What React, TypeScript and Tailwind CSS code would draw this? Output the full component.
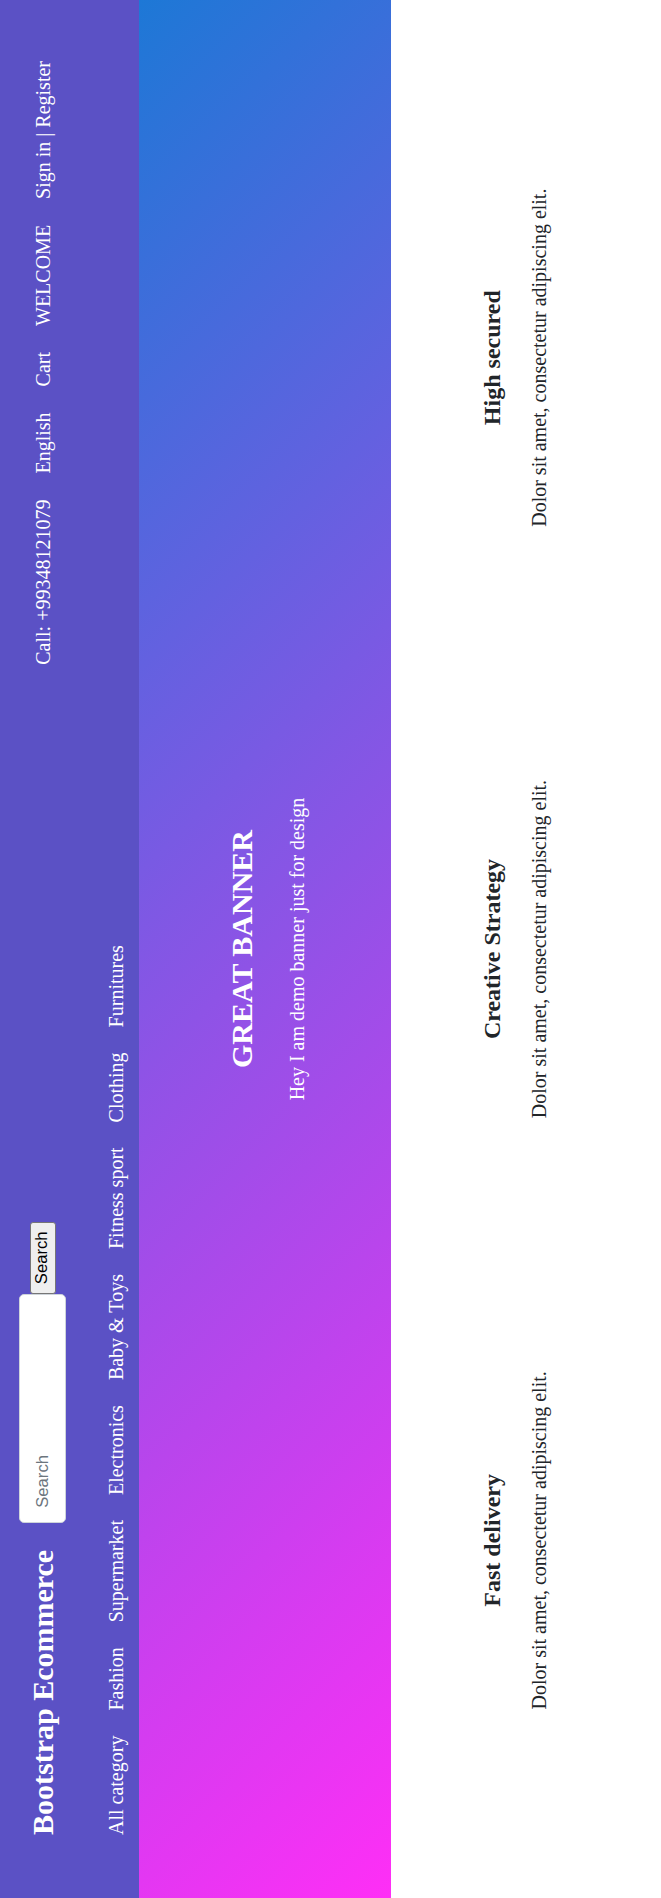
export default function App() {
  const topLinks = ["Call: +99348121079", "English", "Cart", "WELCOME"];
  const categories = [
    "All category",
    "Fashion",
    "Supermarket",
    "Electronics",
    "Baby & Toys",
    "Fitness sport",
    "Clothing",
    "Furnitures",
  ];
  const features = ["Fast delivery", "Creative Strategy", "High secured"];

  return (
    <div className="w-[661px] h-[1898px] overflow-hidden bg-white">
      {/* the page is shown turned a quarter to the left */}
      <div className="w-[1898px] h-[661px] origin-top-left -rotate-90 translate-y-[1898px] font-['Liberation_Serif','Times_New_Roman',serif]">
        <header className="h-[139px] bg-[#5b51c5] text-white pl-[63px] pr-[61px]">
          <div className="flex items-center h-[85px]">
            <h1 className="text-[30px] font-bold leading-[30px] whitespace-nowrap">Bootstrap Ecommerce</h1>
            <form className="flex items-center ml-[27px] font-['Liberation_Sans',Arial,sans-serif] text-[16.67px]">
              <input
                type="text"
                placeholder="Search"
                className="w-[229px] h-[47px] bg-white rounded-[5px] border border-[#ced4da] px-[14px] text-[#495057] placeholder:text-[#6c757d] outline-none"
              />
              <button
                type="button"
                className="w-[72px] h-[26px] bg-[#efefef] border border-[#767676] rounded-[3px] text-black leading-none"
              >
                Search
              </button>
            </form>
            <ul className="ml-auto flex items-center gap-[26px] text-[20px] leading-[20px] whitespace-nowrap">
              {topLinks.map((t) => (
                <li key={t}>{t}</li>
              ))}
              <li>Sign in | Register</li>
            </ul>
          </div>
          <nav className="flex gap-[25px] mt-[21px] text-[20px] leading-[20px] whitespace-nowrap">
            {categories.map((c) => (
              <a key={c} href="#">
                {c}
              </a>
            ))}
          </nav>
        </header>

        <section className="h-[252px] flex flex-col items-center pt-[88px] text-white bg-[linear-gradient(45deg,#ff2ef6,#1d78d6)]">
          <h2 className="text-[30px] font-bold leading-[30px]">GREAT BANNER</h2>
          <p className="mt-[30px] text-[20px] leading-[20px]">Hey I am demo banner just for design</p>
        </section>

        <section className="h-[270px] grid grid-cols-3 px-[62px] pt-[89px] text-[#212529]">
          {features.map((f) => (
            <div key={f} className="flex flex-col items-center text-center">
              <h3 className="text-[24px] font-bold leading-[24px]">{f}</h3>
              <p className="mt-[25px] text-[20px] leading-[20px]">Dolor sit amet, consectetur adipiscing elit.</p>
            </div>
          ))}
        </section>
      </div>
    </div>
  );
}
